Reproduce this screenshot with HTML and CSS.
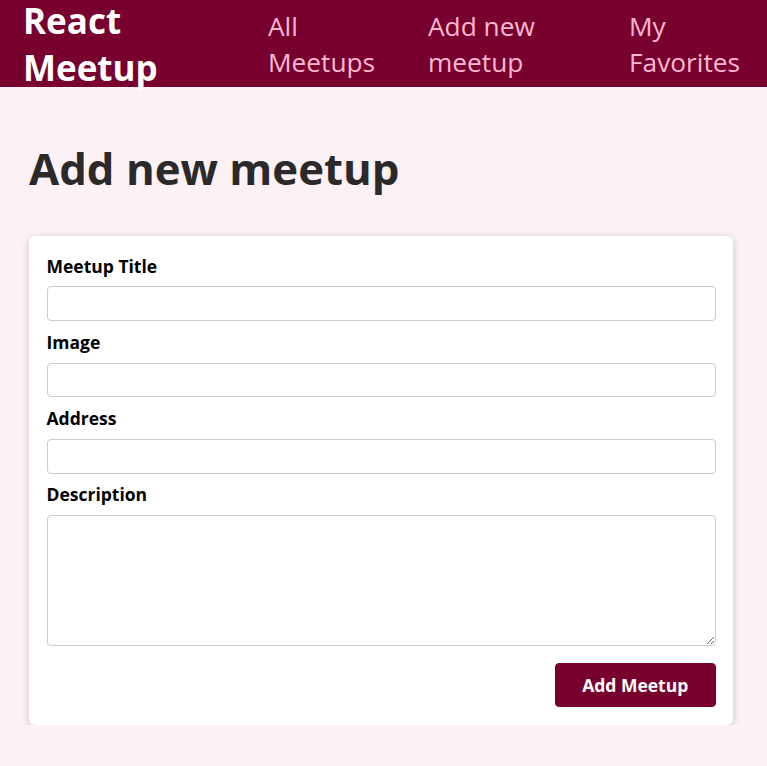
FILE: index.html
```html
<!DOCTYPE html>
<html lang="en">
<head>
<meta charset="utf-8">
<title>React Meetup</title>
<link rel="stylesheet" href="styles.css">
</head>
<body>
<header class="header">
  <div class="logo">React Meetup</div>
  <nav class="nav">
    <ul class="nav-list">
      <li class="nav-item nav-all"><a href="#">All Meetups</a></li>
      <li class="nav-item nav-new"><a href="#">Add new meetup</a></li>
      <li class="nav-item nav-fav"><a href="#">My Favorites</a></li>
    </ul>
  </nav>
</header>
<main class="main">
  <h1 class="title">Add new meetup</h1>
  <div class="card">
    <form class="form">
      <div class="control">
        <label for="title">Meetup Title</label>
        <input type="text" id="title">
      </div>
      <div class="control">
        <label for="image">Image</label>
        <input type="url" id="image">
      </div>
      <div class="control">
        <label for="address">Address</label>
        <input type="text" id="address">
      </div>
      <div class="control">
        <label for="description">Description</label>
        <textarea id="description" rows="5"></textarea>
      </div>
      <div class="actions">
        <button type="button" class="btn">Add Meetup</button>
      </div>
    </form>
  </div>
</main>
</body>
</html>
```
FILE: styles.css
```css
* { box-sizing: border-box; }
html { font-size: 17.5px; }
html, body { margin: 0; }
body {
  font-family: "Open Sans", "Noto Sans", sans-serif;
  background: #fcf1f5;
  color: #2c292b;
}
.header {
  height: 87px;
  display: flex;
  align-items: center;
  background: #77002e;
  padding: 0 28px 0 23px;
}
.logo {
  font-size: 2rem;
  font-weight: bold;
  color: #fff;
  width: 200px;
  flex-shrink: 0;
}
.nav { flex: 1; margin-left: 45px; }
.nav-list {
  list-style: none;
  margin: 0;
  padding: 0;
  display: flex;
  align-items: center;
}
.nav-item a {
  display: block;
  max-width: 125px;
  text-decoration: none;
  color: #fcb8d2;
  font-size: 1.5rem;
}
.nav-all { width: 160px; }
.nav-new { width: 201px; }
.nav-fav { flex: 1; }
.main {
  margin: 0 34px 0 29px;
  padding-top: 51px;
}
.title {
  margin: 0 0 38px;
  font-size: 2.5rem;
  font-weight: bold;
}
.card {
  background: #fff;
  border-radius: 6px;
  box-shadow: 0 2px 8px rgba(0, 0, 0, 0.2);
}
.form { padding: 1rem 1rem 1.05rem; }
.control { margin-bottom: 0.5rem; }
.control label {
  display: block;
  font-weight: bold;
  color: #000;
  margin-bottom: 0.5rem;
}
.control input,
.control textarea {
  display: block;
  width: 100%;
  font: inherit;
  border: 1px solid #ccc;
  border-radius: 4px;
  padding: 0.25rem;
  background: #fff;
}
.actions {
  margin-top: 1rem;
  text-align: right;
}
.btn {
  font: inherit;
  font-weight: bold;
  color: #fff;
  background: #77002e;
  border: 1px solid #77002e;
  border-radius: 4px;
  padding: 0.5rem 1.5rem;
  cursor: pointer;
}
```
